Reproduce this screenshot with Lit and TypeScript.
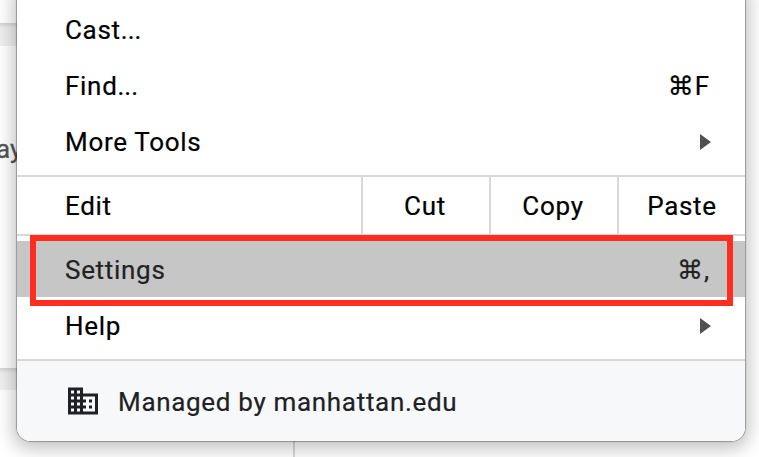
import { LitElement, html, css } from "lit";
import { customElement } from "lit/decorators.js";

@customElement("app-root")
export class AppRoot extends LitElement {
  static styles = css`
    :host { display: block; width: 759px; height: 457px; position: relative; overflow: hidden; background: #fff; font-family: Roboto, "Liberation Sans", sans-serif; }
    .backdrop { width: 759px; height: 457px; display: flex; flex-direction: column; background: #fff; }
    .band-top { width: 17px; height: 23px; margin-top: 23px; background: linear-gradient(#d4d4d4, #eeeeee 5px, #f0f0f0); flex: none; }
    .ghost { margin-top: 88px; height: 30px; flex: none; overflow: hidden; font-size: 26px; line-height: 30px; color: #555; text-indent: -4px; -webkit-text-stroke: 0.3px #555; }
    .band-bottom { width: 293px; margin-top: 204px; height: 22px; background: linear-gradient(#d4d4d4, #eeeeee 5px, #f2f2f2); flex: none; }
    .foot { flex: 1; display: flex; }
    .foot div { width: 293px; border-right: 2px solid #d8d8d8; }
    .menu { position: absolute; left: 17px; top: -20px; width: 728px; height: 461px; box-sizing: border-box; padding-top: 22px; background: #fff; border-radius: 14px; overflow: hidden; display: flex; flex-direction: column; color: #000; font-size: 26px; letter-spacing: 0.7px; -webkit-text-stroke: 0.2px currentColor; }
    .shadow { position: absolute; left: 17px; top: -20px; width: 728px; height: 461px; border-radius: 14px; box-shadow: 0 0 1px 1px rgba(0,0,0,.3), 0 4px 18px 4px rgba(0,0,0,.24); }
    .row { height: 56px; flex: none; display: flex; align-items: center; justify-content: space-between; padding: 0 36px 0 48px; box-sizing: border-box; }
    .dots { letter-spacing: 0; }
    .key { font-family: "DejaVu Sans", sans-serif; font-size: 26px; letter-spacing: 0; display: flex; align-items: center; gap: 1px; }
    .key span { font-family: Roboto, "Liberation Sans", sans-serif; font-size: 26px; }
    .arrow { width: 11px; height: 16px; fill: #505050; stroke: none; display: block; margin-right: -2px; }
    .sep { height: 2px; flex: none; background: #d9d9d9; }
    .gap5 { height: 5px; flex: none; }
    .edit { height: 57px; flex: none; display: flex; align-items: stretch; }
    .edit .label { width: 344px; padding-left: 48px; box-sizing: border-box; display: flex; align-items: center; }
    .edit .cell { border-left: 2px solid #d9d9d9; display: flex; align-items: center; justify-content: center; box-sizing: border-box; width: 128px; padding-right: 2px; }
    .edit .cell.last { flex: 1; width: auto; padding-right: 0; }
    .hi { background: #c6c6c6; color: #222; margin-bottom: 1px; padding-top: 2px; }
    .footer { flex: 1; background: #f6f8fa; display: flex; align-items: center; color: #202124; padding: 0 0 0 48px; gap: 17px; }
    .footer svg { width: 36px; height: 36px; fill: #202124; stroke: none; flex: none; margin-bottom: 1px; }
    .footer span { padding-top: 2px; letter-spacing: 0.68px; }
    .mark { position: absolute; left: 30px; top: 235px; width: 703px; height: 71px; box-sizing: border-box; border: 6px solid #ff2d20; pointer-events: none; }
  `;

  private arrow() {
    return html`<svg class="arrow" viewBox="0 0 11 16"><path d="M0 0L11 8L0 16Z"></path></svg>`;
  }

  render() {
    return html`
      <div class="backdrop">
        <div class="band-top"></div>
        <div class="ghost">ay</div>
        <div class="band-bottom"></div>
        <div class="foot"><div></div></div>
      </div>
      <div class="shadow"></div>
      <div class="menu">
        <div class="row"><span>Cast<span class="dots">...</span></span></div>
        <div class="row"><span>Find<span class="dots">...</span></span><span class="key">⌘<span>F</span></span></div>
        <div class="row"><span>More Tools</span>${this.arrow()}</div>
        <div class="gap5"></div>
        <div class="sep"></div>
        <div class="edit">
          <div class="label">Edit</div>
          <div class="cell">Cut</div>
          <div class="cell">Copy</div>
          <div class="cell last">Paste</div>
        </div>
        <div class="sep"></div>
        <div class="gap5"></div>
        <div class="row hi"><span>Settings</span><span class="key">⌘<span>,</span></span></div>
        <div class="row"><span>Help</span>${this.arrow()}</div>
        <div class="gap5"></div>
        <div class="sep"></div>
        <div class="footer">
          <svg viewBox="0 0 24 24"><path d="M12 7V3H2v18h20V7H12zM6 19H4v-2h2v2zm0-4H4v-2h2v2zm0-4H4V9h2v2zm0-4H4V5h2v2zm4 12H8v-2h2v2zm0-4H8v-2h2v2zm0-4H8V9h2v2zm0-4H8V5h2v2zm10 12h-8v-2h2v-2h-2v-2h2v-2h-2V9h8v10zm-2-8h-2v2h2v-2zm0 4h-2v2h2v-2z"></path></svg>
          <span>Managed by manhattan.edu</span>
        </div>
      </div>
      <div class="mark"></div>
    `;
  }
}
